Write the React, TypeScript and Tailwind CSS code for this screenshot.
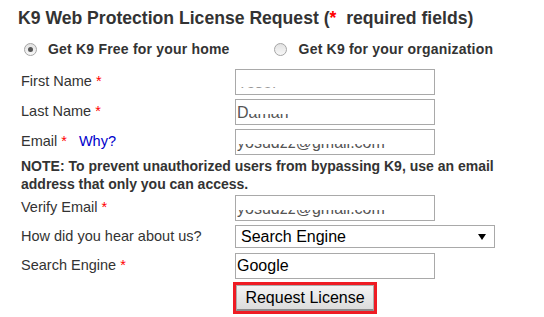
import React from 'react'

const font = { fontFamily: '"Liberation Sans", Arial, sans-serif' }

function Req() {
  return <span className="text-[#ff0000]"> *</span>
}

// text that only shows its lower part, as in the reference
function Clipped({ text, lead, clip = 'h-[7px]', className }: { text: string; lead?: string; clip?: string; className?: string }) {
  return (
    <div className={'flex h-full items-end pb-[3px] pl-[1px] text-[16px] ' + (className ?? '')}>
      {lead && <span className="leading-none">{lead}</span>}
      <div className={'flex items-end overflow-hidden ' + clip}>
        <span className="leading-none whitespace-nowrap">{text}</span>
      </div>
    </div>
  )
}

function Box({ children }: { children?: React.ReactNode }) {
  return <div className="h-[26px] w-[200px] border border-[#a9a9a9] bg-white">{children}</div>
}

function Radio({ checked }: { checked?: boolean }) {
  return (
    <span className="flex h-[13px] w-[13px] items-center justify-center rounded-full border border-[#a5a5a5] bg-gradient-to-b from-[#e2e2e2] to-[#f8f8f8]">
      {checked && <span className="h-[5px] w-[5px] rounded-full bg-[#555]" />}
    </span>
  )
}

function Row({ label, children }: { label: React.ReactNode; children: React.ReactNode }) {
  return (
    <div className="flex items-center">
      <div className="w-[214px] text-[14.5px] text-[#333]">{label}</div>
      {children}
    </div>
  )
}

export default function App() {
  return (
    <div style={font} className="h-[317px] w-[544px] bg-white pl-[21px] text-[#333]">
      <h1 className="-ml-[3px] pt-[7px] text-[17.6px] leading-[22px] font-bold">
        K9 Web Protection License Request (<span className="text-[#ff0000]">*</span>&nbsp; required fields)
      </h1>

      <div className="mt-[10px] flex items-center text-[14px] font-bold tracking-[0.2px]">
        <span className="ml-[3px]"><Radio checked /></span>
        <span className="ml-[11px]">Get K9 Free for your home</span>
        <span className="ml-[44px]"><Radio /></span>
        <span className="ml-[12px]">Get K9 for your organization</span>
      </div>

      <div className="mt-[9px] flex flex-col gap-[4px]">
        <Row label={<>First Name<Req /></>}>
          <Box><Clipped text="Yosef" clip="h-[4px]" className="text-[#999]" /></Box>
        </Row>
        <Row label={<>Last Name<Req /></>}>
          <Box><Clipped lead="D" text="amari" className="text-[#555]" /></Box>
        </Row>
        <Row label={<>Email<Req /><span className="ml-[12px] text-[#0000cc]">Why?</span></>}>
          <Box><Clipped text="yosudzz@gmail.com" className="text-[#555]" /></Box>
        </Row>
      </div>

      <p className="mt-[2px] text-[14px] leading-[18px] font-bold">
        NOTE: To prevent unauthorized users from bypassing K9, use an email address that only you can access.
      </p>

      <div className="mt-[2px] flex flex-col gap-[4px]">
        <Row label={<>Verify Email<Req /></>}>
          <Box><Clipped text="yosudzz@gmail.com" className="text-[#555]" /></Box>
        </Row>
        <div className="mb-[1px]">
          <Row label="How did you hear about us?">
            <div className="flex h-[23px] w-[260px] items-center justify-between border border-[#a9a9a9] bg-white pr-[8px] pl-[5px] text-[16px] text-black">
              <span>Search Engine</span>
              <svg width="8" height="6" viewBox="0 0 8 6"><path d="M0 0h8L4 6z" fill="#000" /></svg>
            </div>
          </Row>
        </div>
        <Row label={<>Search Engine<Req /></>}>
          <Box><div className="flex h-full items-center pl-[1px] text-[16px] text-black">Google</div></Box>
        </Row>
      </div>

      <div className="mt-[3px] ml-[212px] w-[144px] border-[3px] border-[#ee1c24]">
        <button className="flex h-[26px] w-full items-center justify-center border border-b-2 border-[#adadad] border-b-[#8a8a8a] bg-gradient-to-b from-[#f4f4f4] to-[#dcdcdc] text-[16px] text-black">
          Request License
        </button>
      </div>
    </div>
  )
}
